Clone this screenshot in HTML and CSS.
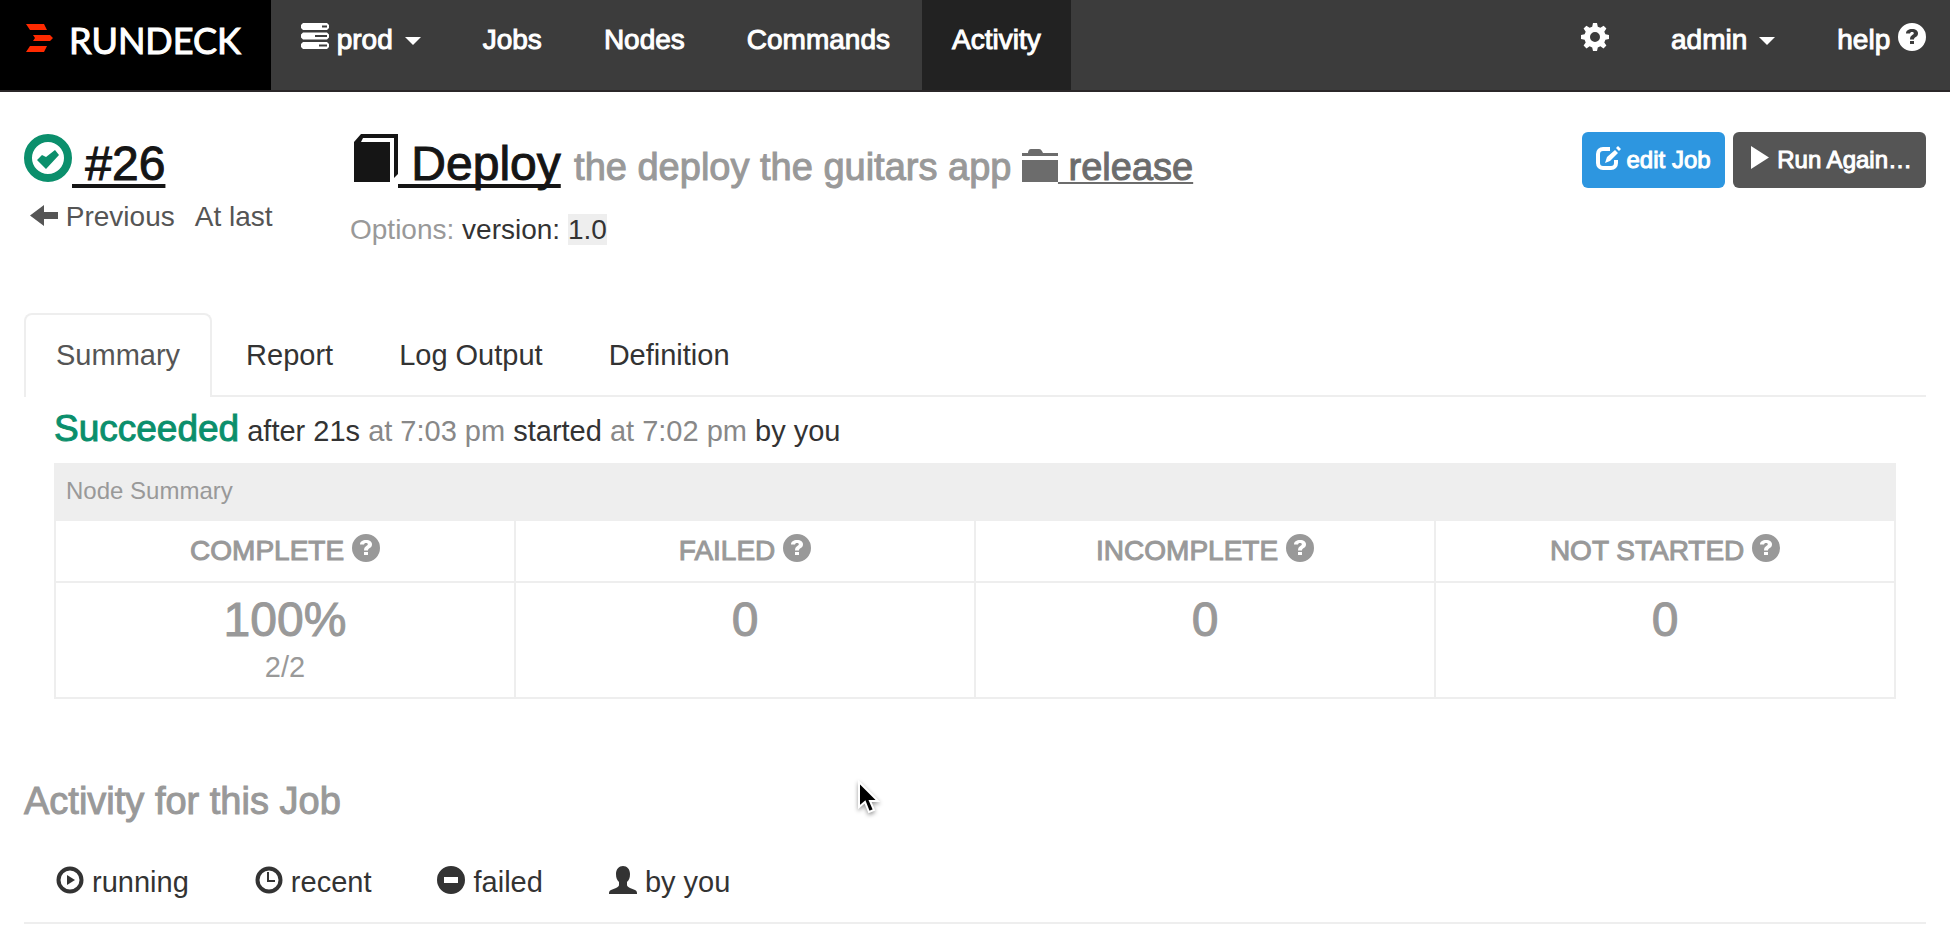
FILE: index.html
```html
<!DOCTYPE html>
<html lang="en">
<head>
<meta charset="utf-8">
<title>Rundeck - Deploy #26</title>
<link rel="stylesheet" href="styles.css">
</head>
<body>
<svg class="defs" aria-hidden="true">
  <symbol id="i-help" viewBox="0 0 28 28"><path fill-rule="evenodd" d="M14 0a14 14 0 1 0 0 28a14 14 0 0 0 0-28zM12 18h4v3h-4zM8 10.500C8 7.500 10.500 6 14 6c4 0 6 1.800 6 4.500 0 2.200-1.500 3-2.600 3.700-1 .6-1.400 1-1.400 2.300h-4c0-2.800 1.100-3.700 2.300-4.500.9-.6 1.500-1 1.500-1.700 0-.8-.7-1.300-1.800-1.300-1.300 0-1.900.6-2 1.500z"/></symbol>
</svg>

<header class="navbar">
  <a class="brand" href="#">
    <svg class="brand-mark" viewBox="0 0 27 28" width="27" height="28"><path d="M0 0h18l3 6H4zM7 11h17l3 3-3 3H7l2-3zM4 22h17l-3 6H0z"/></svg>
    <span>RUNDECK</span>
  </a>
  <nav class="nav">
    <a class="nav-link" href="#"><svg class="icon" viewBox="0 0 28 28"><path fill-rule="evenodd" d="M2 0h24l2 2v3l-2 2H2L0 5V2zM21 2.500v2h5v-2zM2 9.500h24l2 2v3l-2 2H2l-2-2v-3zM14 12v2h12v-2zM2 19h24l2 2v3l-2 2H2l-2-2v-3zM18 21.500v2h8v-2z"/></svg> prod<span class="caret"></span></a>
    <a class="nav-link" href="#">Jobs</a>
    <a class="nav-link" href="#">Nodes</a>
    <a class="nav-link" href="#">Commands</a>
    <a class="nav-link active" href="#" aria-current="page">Activity</a>
  </nav>
  <nav class="nav nav-right">
    <a class="nav-link" href="#" aria-label="Settings"><svg class="icon" viewBox="0 0 28 28"><path fill-rule="evenodd" d="M12 0h4l.8 3.700 2.600 1.100L22.600 2.700l2.800 2.800-2.100 3.200 1.100 2.600L28 12v4l-3.600.8-1.100 2.600 2.100 3.100-2.900 2.900-3.100-2.100-2.600 1.100L16 28h-4l-.8-3.600-2.600-1.100-3.100 2.100-2.900-2.900 2.100-3.100-1.100-2.600L0 16v-4l3.600-.7 1.100-2.600-2.100-3.200 2.800-2.800 3.200 2.100 2.600-1.100zM14 9a5 5 0 1 0 0 10a5 5 0 0 0 0-10z"/></svg></a>
    <a class="nav-link" href="#">admin<span class="caret"></span></a>
    <a class="nav-link" href="#">help <svg class="icon"><use href="#i-help"/></svg></a>
  </nav>
</header>

<main class="page">
  <section class="job-header">
    <div>
      <h1 class="title"><a href="#"><svg class="icon-lg success" viewBox="0 0 48 48"><circle cx="24" cy="24" r="20" fill="none" stroke="currentColor" stroke-width="8"/><path d="M13 26l5-5 4 2 9-7 4 5-13 14z"/></svg> #26</a></h1>
      <div class="pager">
        <a href="#"><svg class="icon" viewBox="0 0 28 28"><path d="M0 15.500L14 5v7h14v7H14v7z"/></svg> Previous</a>
        <span>At last</span>
      </div>
    </div>
    <div>
      <h2 class="title"><a href="#"><svg class="icon-lg" viewBox="0 0 48 48"><path d="M4 8l7-8h37v40l-4 4V4H13l-2 4h29v40H4z"/></svg> Deploy</a> <small>the deploy the guitars app <a class="group" href="#"><svg class="icon-md" viewBox="0 0 36 36"><path d="M0 7h6c0-2 1-4 3-4h8c2 0 3 2 4 4h15v3H0zM0 14h36v22H0z"/></svg> release</a></small></h2>
      <p class="options"><span class="muted">Options:</span> version: <code>1.0</code></p>
    </div>
    <div class="actions">
      <button class="btn btn-info" type="button"><svg class="btn-icon" viewBox="0 0 24 24"><path d="M14 3H7C4 3 2 5 2 8v9c0 3 2 5 5 5h8c3 0 5-2 5-5v-3" fill="none" stroke="currentColor" stroke-width="4"/><path d="M9 17l2-6 8-7 3 3-8 8zM20 2l2-2 3 3-2 2z"/></svg> edit Job</button>
      <button class="btn btn-dark" type="button"><svg class="btn-icon" viewBox="0 0 24 24"><path d="M4 0l18 11.500L4 23z"/></svg> Run Again…</button>
    </div>
  </section>

  <nav class="tabs">
    <a class="tab selected" href="#">Summary</a>
    <a class="tab" href="#">Report</a>
    <a class="tab" href="#">Log Output</a>
    <a class="tab" href="#">Definition</a>
  </nav>

  <section class="summary">
    <p class="status"><strong>Succeeded</strong> after 21s <time>at 7:03 pm</time> started <time>at 7:02 pm</time> by you</p>
    <table class="nodes">
      <thead>
        <tr><th class="caption" colspan="4">Node Summary</th></tr>
        <tr class="heads">
          <th>COMPLETE <svg class="icon"><use href="#i-help"/></svg></th>
          <th>FAILED <svg class="icon"><use href="#i-help"/></svg></th>
          <th>INCOMPLETE <svg class="icon"><use href="#i-help"/></svg></th>
          <th>NOT STARTED <svg class="icon"><use href="#i-help"/></svg></th>
        </tr>
      </thead>
      <tbody>
        <tr>
          <td><div class="count">100%</div><div>2/2</div></td>
          <td><div class="count">0</div></td>
          <td><div class="count">0</div></td>
          <td><div class="count">0</div></td>
        </tr>
      </tbody>
    </table>
  </section>

  <h3 class="activity-title">Activity for this Job</h3>
  <nav class="tabs activity-tabs">
    <a class="tab" href="#"><svg class="icon" viewBox="0 0 28 28"><circle cx="14" cy="14" r="11.500" fill="none" stroke="currentColor" stroke-width="4"/><path d="M11 9l8 5-8 5z"/></svg> running</a>
    <a class="tab" href="#"><svg class="icon" viewBox="0 0 28 28"><circle cx="14" cy="14" r="11.500" fill="none" stroke="currentColor" stroke-width="4"/><path d="M12 6h2v8h6v2h-8z"/></svg> recent</a>
    <a class="tab" href="#"><svg class="icon" viewBox="0 0 28 28"><path fill-rule="evenodd" d="M14 0a14 14 0 1 0 0 28a14 14 0 0 0 0-28zM7 11h14v6H7z"/></svg> failed</a>
    <a class="tab" href="#"><svg class="icon" viewBox="0 0 28 28"><path d="M14 0c4 0 7 3 7 8 0 4-1 6-3 8v3c0 1 1 2 3 3l5 2c2 1 2 2 2 4H0c0-2 0-3 2-4l5-2c2-1 3-2 3-3v-3c-2-2-3-4-3-8 0-5 3-8 7-8z"/></svg> by you</a>
  </nav>
</main>

<svg class="pointer" viewBox="0 0 24 36" width="24" height="36" aria-hidden="true"><path d="M2 2v25l6-5 4 10 5-2-4-9h8z" fill="#000" stroke="#fff" stroke-width="2"/></svg>
</body>
</html>
```

FILE: styles.css
```css
* { box-sizing: border-box; }

body {
  margin: 0;
  background: #fff;
  color: #333;
  font: 28px/40px "Liberation Sans", Arial, sans-serif;
}

a { color: inherit; text-decoration: none; }
h1, h2, h3, p { margin: 0; font-weight: 400; }

.defs { position: absolute; width: 0; height: 0; }
.icon { width: 28px; height: 28px; vertical-align: -2px; fill: currentColor; }
.icon-md { width: 36px; height: 36px; vertical-align: -2px; fill: currentColor; }
.icon-lg { width: 48px; height: 48px; vertical-align: -2px; fill: currentColor; }

/* top bar */
.navbar {
  display: flex;
  background: #3c3c3c;
  border-bottom: 2px solid #2b2729;
  color: #fff;
  -webkit-text-stroke: 1px;
}
.navbar svg { stroke: none; }
.brand {
  display: flex;
  gap: 16px;
  align-items: flex-start;
  padding: 20px 30px 30px 26px;
  background: #000;
  font-family: Lato, sans-serif;
  font-size: 36px;
}
.brand-mark { margin-top: 4px; fill: #ff2a00; }
.nav { display: flex; gap: 2px; }
.nav-right { margin-left: auto; }
.nav-link { padding: 20px 30px 30px; white-space: nowrap; }
.nav-right .nav-link:last-child { padding-right: 24px; }
.nav-link.active { background: #222; }
.caret {
  display: inline-block;
  margin-left: 12px;
  border: 8px solid transparent;
  border-top-color: #fff;
  border-bottom: 0;
  vertical-align: 4px;
}

.page { padding: 40px 24px 0; }

/* job header */
.job-header {
  display: grid;
  grid-template-columns: 326px 1fr auto;
}
.title {
  margin-top: 2px;
  color: #151515;
  font-size: 48px;
  line-height: 56px;
  -webkit-text-stroke: 1px;
}
.title a {
  text-decoration: underline;
  text-decoration-thickness: 4px;
  text-decoration-skip-ink: none;
  text-underline-offset: 4px;
}
.title small { color: #999; font-size: 38px; }
.title .group {
  color: #6c6c6c;
  text-decoration-thickness: 2px;
  text-underline-offset: 2px;
}
.title .success { color: #0b8f6c; }
.pager { display: flex; gap: 20px; margin-top: 5px; padding-left: 6px; color: #555; }
.options { margin-top: 15px; }
.muted { color: #999; }
.options code { background: #eee; font-family: inherit; }
.actions { display: flex; gap: 8px; align-items: flex-start; }
.btn {
  padding: 8px 14px;
  border: 0;
  border-radius: 6px;
  color: #fff;
  font: 24px/40px "Liberation Sans", Arial, sans-serif;
  -webkit-text-stroke: 1px;
}
.btn-info { background: #2d96e0; }
.btn-dark { background: #555; }
.btn-icon { width: 24px; height: 24px; overflow: visible; vertical-align: -2px; fill: currentColor; }

/* tabs */
.tabs {
  display: flex;
  gap: 2px;
  margin-top: 63px;
  border-bottom: 2px solid #eee;
  font-size: 29px;
}
.tab {
  margin-bottom: -2px;
  padding: 20px 30px 22px;
  border: 2px solid transparent;
  border-bottom: 0;
}
.tab.selected {
  border-color: #eee;
  border-radius: 8px 8px 0 0;
  background: #fff;
  color: #555;
}

/* execution summary */
.summary { padding: 0 30px; }
.status { padding: 12px 0; font-size: 29px; }
.status strong {
  color: #0b8f6c;
  font-size: 37px;
  font-weight: 400;
  -webkit-text-stroke: 1px;
}
.status time { color: #888; }
.nodes {
  width: 100%;
  border-collapse: collapse;
  table-layout: fixed;
  color: #999;
  font-size: 29px;
}
.nodes th, .nodes td { padding: 10px; border: 2px solid #eee; font-weight: 400; text-align: center; vertical-align: top; }
.nodes .caption { padding: 6px 10px 8px; background: #eee; font-size: 24px; text-align: left; }
.nodes .heads { font-size: 28px; -webkit-text-stroke: 1px; }
.count { font-size: 48px; line-height: 54px; -webkit-text-stroke: 1px; }

/* activity */
.activity-title {
  margin-top: 82px;
  color: #999;
  font-size: 38px;
  -webkit-text-stroke: 1px;
}
.activity-tabs { margin-top: 19px; }

.pointer {
  position: absolute;
  left: 857px;
  top: 780px;
  filter: drop-shadow(0 2px 2px #0006);
}
```
